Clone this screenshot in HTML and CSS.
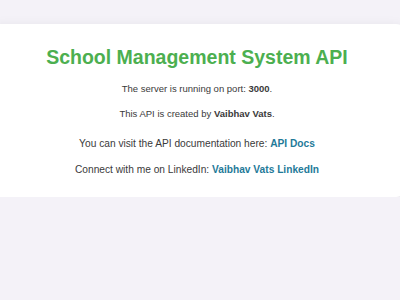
FILE: index.html
```html
<!DOCTYPE html>
<html>
<head>
    <meta charset="utf-8">
    <title>School Management System API</title>
    <link rel="stylesheet" href="styles.css">
</head>
<body>
    <div class="container">
        <h1 class="title">School Management System API</h1>
        <p class="info">The server is running on port: <b>3000</b>.</p>
        <p class="info second">This API is created by <b>Vaibhav Vats</b>.</p>
        <p class="links">You can visit the API documentation here: <a href="#">API Docs</a></p>
        <p class="links last">Connect with me on LinkedIn: <a href="#">Vaibhav Vats LinkedIn</a></p>
    </div>
</body>
</html>
```

FILE: styles.css
```css
body{
	margin: 0;
	padding: 24px 0 0 0;
	background-color: #f4f2f8;
	font-family: "Liberation Sans", Arial, sans-serif;
	color: #3a3a3a;
	overflow: hidden;
}
.container{
	background-color: #ffffff;
	padding: 21px 0 20px 0;
	margin: 0 -6px 0 -12px;
	text-align: center;
	border-radius: 10px;
	box-shadow: 0 4px 14px rgba(0, 0, 0, 0.1);
}
.title{
	margin: 0;
	font-size: 19.5px;
	line-height: 24px;
	color: #4caf50;
}
p{
	margin: 0;
}
.info{
	font-size: 9.5px;
	line-height: 12px;
	margin-top: 14px;
}
.info.second{
	margin-top: 13px;
}
.links{
	font-size: 10.2px;
	line-height: 14px;
	margin-top: 17px;
}
.links.last{
	margin-top: 12px;
}
a{
	color: #1f7a99;
	font-weight: bold;
	text-decoration: none;
}
```
